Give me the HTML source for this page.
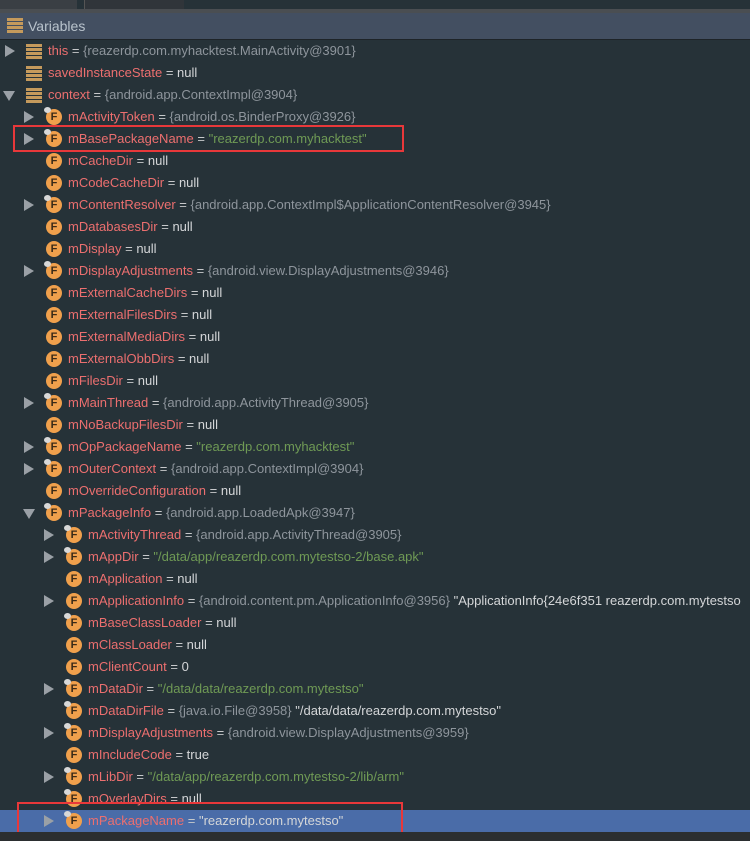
<!DOCTYPE html>
<html><head><meta charset="utf-8"><style>
*{margin:0;padding:0;box-sizing:border-box}
body{width:750px;height:841px;overflow:hidden;background:#263238;font-family:"Liberation Sans",sans-serif;font-size:13px;position:relative}
.top{position:absolute;left:0;top:0;width:750px;height:9px;background:#263238}
.sep{position:absolute;left:0;top:9px;width:750px;height:4px;background:#4a4e52}
.hdr{position:absolute;left:0;top:13px;width:750px;height:27px;background:#434f61;border-bottom:1px solid #1e2428}
.hdr span{position:absolute;left:28px;top:5px;color:#b9c3cc;font-size:14px}
.stk{position:absolute;width:16px;height:15px}
.stk i{display:block;height:3px;background:#c59a5c;margin-bottom:1px}
.row{position:absolute;left:0;width:750px;height:22px;white-space:nowrap}
.row.sel{background:#4a6ca8}
.ar{position:absolute;top:5px;width:0;height:0;border-top:6px solid transparent;border-bottom:6px solid transparent;border-left:10px solid #9aa0a6}
.ad{position:absolute;top:7px;width:0;height:0;border-left:6px solid transparent;border-right:6px solid transparent;border-top:10px solid #9aa0a6}
.f{position:absolute;top:3px;width:16px;height:16px;border-radius:50%;background:#f0a04c;color:#3a2a18;font-weight:bold;font-size:11px;text-align:center;line-height:16px}
.pin{position:absolute;top:1px;width:7px;height:6px;border-radius:50%;background:#d8d8d8}
.t{position:absolute;top:3px}
.n{color:#ec6f6f}.e{color:#c7c9cb}.v{color:#8e959c}.s{color:#6f9a55}.w{color:#d4d6d8}
.box{position:absolute;border:2px solid #e8383a}
.bot{position:absolute;left:0;top:832px;width:750px;height:9px;background:#2b2e30}
</style></head><body>
<div class="top"></div>
<div style="position:absolute;left:0;top:0;width:77px;height:9px;background:#3a3f44"></div>
<div style="position:absolute;left:84px;top:0;width:100px;height:9px;background:#30353a;border-left:1px solid #555"></div>
<div class="sep"></div>
<div class="hdr"><div class="stk" style="left:7px;top:5px"><i></i><i></i><i></i><i></i></div><span>Variables</span></div>

<div class="row" style="top:40px"><div class="ar" style="left:5px"></div><div class="stk" style="left:26px;top:4px"><i></i><i></i><i></i><i></i></div><span class="t" style="left:48px"><span class="n">this</span> <span class="e">=</span> <span class="v">{reazerdp.com.myhacktest.MainActivity@3901}</span></span></div>
<div class="row" style="top:62px"><div class="stk" style="left:26px;top:4px"><i></i><i></i><i></i><i></i></div><span class="t" style="left:48px"><span class="n">savedInstanceState</span> <span class="e">=</span> <span class="w">null</span></span></div>
<div class="row" style="top:84px"><div class="ad" style="left:3px"></div><div class="stk" style="left:26px;top:4px"><i></i><i></i><i></i><i></i></div><span class="t" style="left:48px"><span class="n">context</span> <span class="e">=</span> <span class="v">{android.app.ContextImpl@3904}</span></span></div>

<div class="row" style="top:106px"><div class="ar" style="left:24px"></div><div class="f" style="left:46px">F</div><div class="pin" style="left:44px"></div><span class="t" style="left:68px"><span class="n">mActivityToken</span> <span class="e">=</span> <span class="v">{android.os.BinderProxy@3926}</span></span></div>
<div class="row" style="top:128px"><div class="ar" style="left:24px"></div><div class="f" style="left:46px">F</div><div class="pin" style="left:44px"></div><span class="t" style="left:68px"><span class="n">mBasePackageName</span> <span class="e">=</span> <span class="s">"reazerdp.com.myhacktest"</span></span></div>
<div class="row" style="top:150px"><div class="f" style="left:46px">F</div><span class="t" style="left:68px"><span class="n">mCacheDir</span> <span class="e">=</span> <span class="w">null</span></span></div>
<div class="row" style="top:172px"><div class="f" style="left:46px">F</div><span class="t" style="left:68px"><span class="n">mCodeCacheDir</span> <span class="e">=</span> <span class="w">null</span></span></div>
<div class="row" style="top:194px"><div class="ar" style="left:24px"></div><div class="f" style="left:46px">F</div><div class="pin" style="left:44px"></div><span class="t" style="left:68px"><span class="n">mContentResolver</span> <span class="e">=</span> <span class="v">{android.app.ContextImpl$ApplicationContentResolver@3945}</span></span></div>
<div class="row" style="top:216px"><div class="f" style="left:46px">F</div><span class="t" style="left:68px"><span class="n">mDatabasesDir</span> <span class="e">=</span> <span class="w">null</span></span></div>
<div class="row" style="top:238px"><div class="f" style="left:46px">F</div><span class="t" style="left:68px"><span class="n">mDisplay</span> <span class="e">=</span> <span class="w">null</span></span></div>
<div class="row" style="top:260px"><div class="ar" style="left:24px"></div><div class="f" style="left:46px">F</div><div class="pin" style="left:44px"></div><span class="t" style="left:68px"><span class="n">mDisplayAdjustments</span> <span class="e">=</span> <span class="v">{android.view.DisplayAdjustments@3946}</span></span></div>
<div class="row" style="top:282px"><div class="f" style="left:46px">F</div><span class="t" style="left:68px"><span class="n">mExternalCacheDirs</span> <span class="e">=</span> <span class="w">null</span></span></div>
<div class="row" style="top:304px"><div class="f" style="left:46px">F</div><span class="t" style="left:68px"><span class="n">mExternalFilesDirs</span> <span class="e">=</span> <span class="w">null</span></span></div>
<div class="row" style="top:326px"><div class="f" style="left:46px">F</div><span class="t" style="left:68px"><span class="n">mExternalMediaDirs</span> <span class="e">=</span> <span class="w">null</span></span></div>
<div class="row" style="top:348px"><div class="f" style="left:46px">F</div><span class="t" style="left:68px"><span class="n">mExternalObbDirs</span> <span class="e">=</span> <span class="w">null</span></span></div>
<div class="row" style="top:370px"><div class="f" style="left:46px">F</div><span class="t" style="left:68px"><span class="n">mFilesDir</span> <span class="e">=</span> <span class="w">null</span></span></div>
<div class="row" style="top:392px"><div class="ar" style="left:24px"></div><div class="f" style="left:46px">F</div><div class="pin" style="left:44px"></div><span class="t" style="left:68px"><span class="n">mMainThread</span> <span class="e">=</span> <span class="v">{android.app.ActivityThread@3905}</span></span></div>
<div class="row" style="top:414px"><div class="f" style="left:46px">F</div><span class="t" style="left:68px"><span class="n">mNoBackupFilesDir</span> <span class="e">=</span> <span class="w">null</span></span></div>
<div class="row" style="top:436px"><div class="ar" style="left:24px"></div><div class="f" style="left:46px">F</div><div class="pin" style="left:44px"></div><span class="t" style="left:68px"><span class="n">mOpPackageName</span> <span class="e">=</span> <span class="s">"reazerdp.com.myhacktest"</span></span></div>
<div class="row" style="top:458px"><div class="ar" style="left:24px"></div><div class="f" style="left:46px">F</div><div class="pin" style="left:44px"></div><span class="t" style="left:68px"><span class="n">mOuterContext</span> <span class="e">=</span> <span class="v">{android.app.ContextImpl@3904}</span></span></div>
<div class="row" style="top:480px"><div class="f" style="left:46px">F</div><span class="t" style="left:68px"><span class="n">mOverrideConfiguration</span> <span class="e">=</span> <span class="w">null</span></span></div>
<div class="row" style="top:502px"><div class="ad" style="left:23px"></div><div class="f" style="left:46px">F</div><div class="pin" style="left:44px"></div><span class="t" style="left:68px"><span class="n">mPackageInfo</span> <span class="e">=</span> <span class="v">{android.app.LoadedApk@3947}</span></span></div>

<div class="row" style="top:524px"><div class="ar" style="left:44px"></div><div class="f" style="left:66px">F</div><div class="pin" style="left:64px"></div><span class="t" style="left:88px"><span class="n">mActivityThread</span> <span class="e">=</span> <span class="v">{android.app.ActivityThread@3905}</span></span></div>
<div class="row" style="top:546px"><div class="ar" style="left:44px"></div><div class="f" style="left:66px">F</div><div class="pin" style="left:64px"></div><span class="t" style="left:88px"><span class="n">mAppDir</span> <span class="e">=</span> <span class="s">"/data/app/reazerdp.com.mytestso-2/base.apk"</span></span></div>
<div class="row" style="top:568px"><div class="f" style="left:66px">F</div><span class="t" style="left:88px"><span class="n">mApplication</span> <span class="e">=</span> <span class="w">null</span></span></div>
<div class="row" style="top:590px"><div class="ar" style="left:44px"></div><div class="f" style="left:66px">F</div><span class="t" style="left:88px"><span class="n">mApplicationInfo</span> <span class="e">=</span> <span class="v">{android.content.pm.ApplicationInfo@3956}</span> <span class="w">"ApplicationInfo{24e6f351 reazerdp.com.mytestso</span></span></div>
<div class="row" style="top:612px"><div class="f" style="left:66px">F</div><div class="pin" style="left:64px"></div><span class="t" style="left:88px"><span class="n">mBaseClassLoader</span> <span class="e">=</span> <span class="w">null</span></span></div>
<div class="row" style="top:634px"><div class="f" style="left:66px">F</div><span class="t" style="left:88px"><span class="n">mClassLoader</span> <span class="e">=</span> <span class="w">null</span></span></div>
<div class="row" style="top:656px"><div class="f" style="left:66px">F</div><span class="t" style="left:88px"><span class="n">mClientCount</span> <span class="e">=</span> <span class="w">0</span></span></div>
<div class="row" style="top:678px"><div class="ar" style="left:44px"></div><div class="f" style="left:66px">F</div><div class="pin" style="left:64px"></div><span class="t" style="left:88px"><span class="n">mDataDir</span> <span class="e">=</span> <span class="s">"/data/data/reazerdp.com.mytestso"</span></span></div>
<div class="row" style="top:700px"><div class="f" style="left:66px">F</div><div class="pin" style="left:64px"></div><span class="t" style="left:88px"><span class="n">mDataDirFile</span> <span class="e">=</span> <span class="v">{java.io.File@3958}</span> <span class="w">"/data/data/reazerdp.com.mytestso"</span></span></div>
<div class="row" style="top:722px"><div class="ar" style="left:44px"></div><div class="f" style="left:66px">F</div><div class="pin" style="left:64px"></div><span class="t" style="left:88px"><span class="n">mDisplayAdjustments</span> <span class="e">=</span> <span class="v">{android.view.DisplayAdjustments@3959}</span></span></div>
<div class="row" style="top:744px"><div class="f" style="left:66px">F</div><span class="t" style="left:88px"><span class="n">mIncludeCode</span> <span class="e">=</span> <span class="w">true</span></span></div>
<div class="row" style="top:766px"><div class="ar" style="left:44px"></div><div class="f" style="left:66px">F</div><div class="pin" style="left:64px"></div><span class="t" style="left:88px"><span class="n">mLibDir</span> <span class="e">=</span> <span class="s">"/data/app/reazerdp.com.mytestso-2/lib/arm"</span></span></div>
<div class="row" style="top:788px"><div class="f" style="left:66px">F</div><div class="pin" style="left:64px"></div><span class="t" style="left:88px"><span class="n">mOverlayDirs</span> <span class="e">=</span> <span class="w">null</span></span></div>
<div class="row sel" style="top:810px"><div class="ar" style="left:44px"></div><div class="f" style="left:66px">F</div><div class="pin" style="left:64px"></div><span class="t" style="left:88px"><span class="n">mPackageName</span> <span class="e">=</span> <span class="w">"reazerdp.com.mytestso"</span></span></div>

<div class="box" style="left:13px;top:125px;width:391px;height:27px"></div>
<div class="box" style="left:17px;top:802px;width:386px;height:34px"></div>
<div class="bot"></div>
</body></html>
